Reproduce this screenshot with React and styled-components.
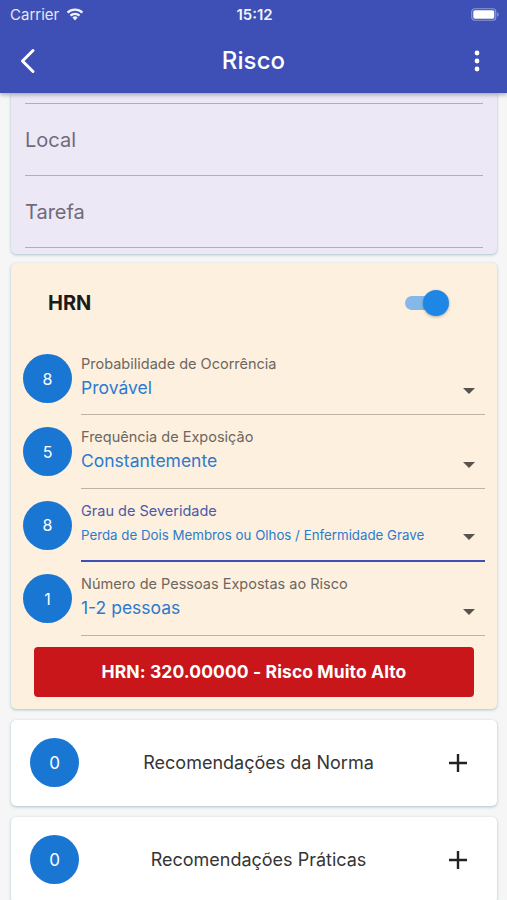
import React from "react";
import styled, { createGlobalStyle } from "styled-components";

const Global = createGlobalStyle`
  html, body { margin: 0; padding: 0; background: #f6f6f7; }
  body { font-family: Inter, "Noto Sans", sans-serif; -webkit-font-smoothing: antialiased; }
  * { box-sizing: border-box; }
`;

const Screen = styled.div`
  width: 507px;
  height: 900px;
  overflow: hidden;
  display: flex;
  flex-direction: column;
  background: #f6f6f7;
  position: relative;
`;

const Header = styled.header`
  background: #3e50b5;
  color: #fff;
  box-shadow: 0 2px 4px rgba(0, 0, 0, 0.28);
  position: relative;
  z-index: 2;
  flex: none;
`;

const StatusBar = styled.div`
  height: 28px;
  display: grid;
  grid-template-columns: 1fr auto 1fr;
  align-items: center;
  padding: 0 8px 0 10px;
  font-size: 15px;
`;

const Carrier = styled.div`
  display: flex;
  align-items: center;
  gap: 7px;
  color: #e3e6f6;
  font-weight: 400;
`;

const Clock = styled.div`
  font-weight: 600;
  font-size: 15px;
  color: #f2f3fb;
`;

const Battery = styled.div`
  justify-self: end;
  display: flex;
  align-items: center;
`;

const Toolbar = styled.div`
  height: 65px;
  display: grid;
  grid-template-columns: 60px 1fr 60px;
  align-items: center;
`;

const IconBtn = styled.div`
  display: flex;
  align-items: center;
  justify-content: ${(p) => p.$justify || "center"};
  padding: ${(p) => p.$pad || "0"};
`;

const Title = styled.div`
  text-align: center;
  font-size: 24px;
  font-weight: 500;
  letter-spacing: 0.1px;
`;

const Content = styled.main`
  flex: 1;
  display: flex;
  flex-direction: column;
  gap: 9px;
  padding: 0 10px 0 11px;
`;

const Card = styled.section`
  background: ${(p) => p.$bg || "#fff"};
  border-radius: ${(p) => (p.$flatTop ? "0 0 5px 5px" : "5px")};
  box-shadow: 0 1px 3px rgba(70, 140, 150, 0.45), 0 0 1px rgba(0, 0, 0, 0.08);
`;

const FormCard = styled(Card)`
  padding: 0 14px 6px;
`;

const TextField = styled.div`
  height: ${(p) => p.$h || "72px"};
  border-bottom: 1.5px solid #b1adbd;
  display: flex;
  align-items: center;
  font-size: 20px;
  color: #706b7a;
`;

const HrnCard = styled(Card)`
  padding: 0 12px 12px;
`;

const HrnHeader = styled.div`
  height: 79px;
  display: flex;
  align-items: center;
  justify-content: space-between;
  padding: 0 40px 0 25px;
`;

const HrnTitle = styled.div`
  font-size: 20px;
  font-weight: 700;
  color: #1b1b1b;
`;

const SwitchTrack = styled.div`
  position: relative;
  width: 40px;
  height: 14px;
  border-radius: 7px;
  background: #84b8e8;
`;

const SwitchThumb = styled.div`
  position: absolute;
  right: -4px;
  top: -6px;
  width: 26px;
  height: 26px;
  border-radius: 50%;
  background: #1e86e4;
  box-shadow: 0 1px 3px rgba(0, 0, 0, 0.3);
`;

const Row = styled.div`
  height: ${(p) => (p.$first ? "73px" : "73.5px")};
  display: flex;
  align-items: center;
  gap: 9px;
`;

const Badge = styled.div`
  flex: none;
  width: 49px;
  height: 49px;
  border-radius: 50%;
  background: #1a76d3;
  color: #fff;
  display: flex;
  align-items: center;
  justify-content: center;
  font-size: ${(p) => p.$fs || "16px"};
  font-weight: 400;
`;

const Select = styled.div`
  flex: 1;
  align-self: stretch;
  display: flex;
  align-items: flex-end;
  border-bottom: ${(p) => (p.$active ? "2.5px solid #3e50b5" : "1.5px solid #bfb4a4")};
  padding: 13px 10px 0 0;
`;

const SelectText = styled.div`
  flex: 1;
  align-self: flex-start;
  display: flex;
  flex-direction: column;
  gap: 3px;
`;

const Label = styled.div`
  font-size: 14.5px;
  color: ${(p) => (p.$active ? "#4b5aa8" : "#6c6760")};
  line-height: 18px;
`;

const Value = styled.div`
  font-size: ${(p) => (p.$small ? "13.3px" : "17.5px")};
  line-height: 24px;
  color: #2b7bd0;
  white-space: nowrap;
`;

const Arrow = styled.div`
  width: 0;
  height: 0;
  border-left: 6px solid transparent;
  border-right: 6px solid transparent;
  border-top: 6px solid #57534f;
  margin-bottom: 20px;
`;

const ResultBar = styled.div`
  margin: 11px 11px 0;
  height: 50px;
  border-radius: 4px;
  background: #c8161b;
  color: #fff;
  display: flex;
  align-items: center;
  justify-content: center;
  font-size: 17.5px;
  font-weight: 700;
  letter-spacing: 0.1px;
`;

const RecCard = styled(Card)`
  height: 86px;
  display: flex;
  align-items: center;
  padding: 0 19px 0 19px;
  margin-top: 2px;
`;

const RecTitle = styled.div`
  flex: 1;
  text-align: center;
  font-size: 18px;
  color: #353535;
`;

const PlusBtn = styled.div`
  width: 40px;
  height: 40px;
  display: flex;
  align-items: center;
  justify-content: center;
`;

const rows = [
  { n: 8, label: "Probabilidade de Ocorrência", value: "Provável" },
  { n: 5, label: "Frequência de Exposição", value: "Constantemente" },
  { n: 8, label: "Grau de Severidade", value: "Perda de Dois Membros ou Olhos / Enfermidade Grave", small: true, active: true },
  { n: 1, label: "Número de Pessoas Expostas ao Risco", value: "1-2 pessoas" },
];

const Plus = () => (
  <svg width="22" height="22" viewBox="0 0 22 22">
    <path d="M11 2v18M2 11h18" stroke="#222" strokeWidth="2.4" />
  </svg>
);

export default function App() {
  return (
    <>
      <Global />
      <Screen>
        <Header>
          <StatusBar>
            <Carrier>
              Carrier
              <svg width="18" height="13" viewBox="0 0 18 13">
                <path d="M9 12.5l2.6-3.1a4 4 0 0 0-5.2 0z" fill="#eef0fa" />
                <path d="M3.7 6.8a7.6 7.6 0 0 1 10.6 0l-1.5 1.8a5.3 5.3 0 0 0-7.6 0z" fill="#eef0fa" />
                <path d="M0.8 3.7a11.8 11.8 0 0 1 16.4 0l-1.5 1.8a9.4 9.4 0 0 0-13.4 0z" fill="#eef0fa" />
              </svg>
            </Carrier>
            <Clock>15:12</Clock>
            <Battery>
              <svg width="28" height="13" viewBox="0 0 28 13">
                <rect x="0.75" y="0.75" width="24" height="11.5" rx="3" fill="none" stroke="#8d98d6" strokeWidth="1.2" />
                <rect x="2.3" y="2.3" width="21" height="8.4" rx="1.6" fill="#fff" />
                <path d="M26.2 4.3v4.4c0.9-0.3 1.4-1.2 1.4-2.2s-0.5-1.9-1.4-2.2z" fill="#8d98d6" />
              </svg>
            </Battery>
          </StatusBar>
          <Toolbar>
            <IconBtn $justify="flex-start" $pad="0 0 0 19px">
              <svg width="18" height="26" viewBox="0 0 18 26">
                <path d="M14 2.5L3.5 13 14 23.5" fill="none" stroke="#fff" strokeWidth="3" strokeLinecap="round" strokeLinejoin="round" />
              </svg>
            </IconBtn>
            <Title>Risco</Title>
            <IconBtn $justify="flex-end" $pad="0 27px 0 0">
              <svg width="6" height="22" viewBox="0 0 6 22">
                <circle cx="3" cy="3" r="2.4" fill="#fff" />
                <circle cx="3" cy="11" r="2.4" fill="#fff" />
                <circle cx="3" cy="19" r="2.4" fill="#fff" />
              </svg>
            </IconBtn>
          </Toolbar>
        </Header>
        <Content>
          <FormCard $bg="#ece8f6" $flatTop>
            <TextField $h="11px" />
            <TextField>Local</TextField>
            <TextField>Tarefa</TextField>
          </FormCard>
          <HrnCard $bg="#fdf0de">
            <HrnHeader>
              <HrnTitle>HRN</HrnTitle>
              <SwitchTrack>
                <SwitchThumb />
              </SwitchTrack>
            </HrnHeader>
            {rows.map((r, i) => (
              <Row key={i} $first={i === 0}>
                <Badge>{r.n}</Badge>
                <Select $active={r.active}>
                  <SelectText>
                    <Label $active={r.active}>{r.label}</Label>
                    <Value $small={r.small}>{r.value}</Value>
                  </SelectText>
                  <Arrow />
                </Select>
              </Row>
            ))}
            <ResultBar>HRN: 320.00000 - Risco Muito Alto</ResultBar>
          </HrnCard>
          <RecCard>
            <Badge $fs="17px">0</Badge>
            <RecTitle>Recomendações da Norma</RecTitle>
            <PlusBtn><Plus /></PlusBtn>
          </RecCard>
          <RecCard>
            <Badge $fs="17px">0</Badge>
            <RecTitle>Recomendações Práticas</RecTitle>
            <PlusBtn><Plus /></PlusBtn>
          </RecCard>
        </Content>
      </Screen>
    </>
  );
}
